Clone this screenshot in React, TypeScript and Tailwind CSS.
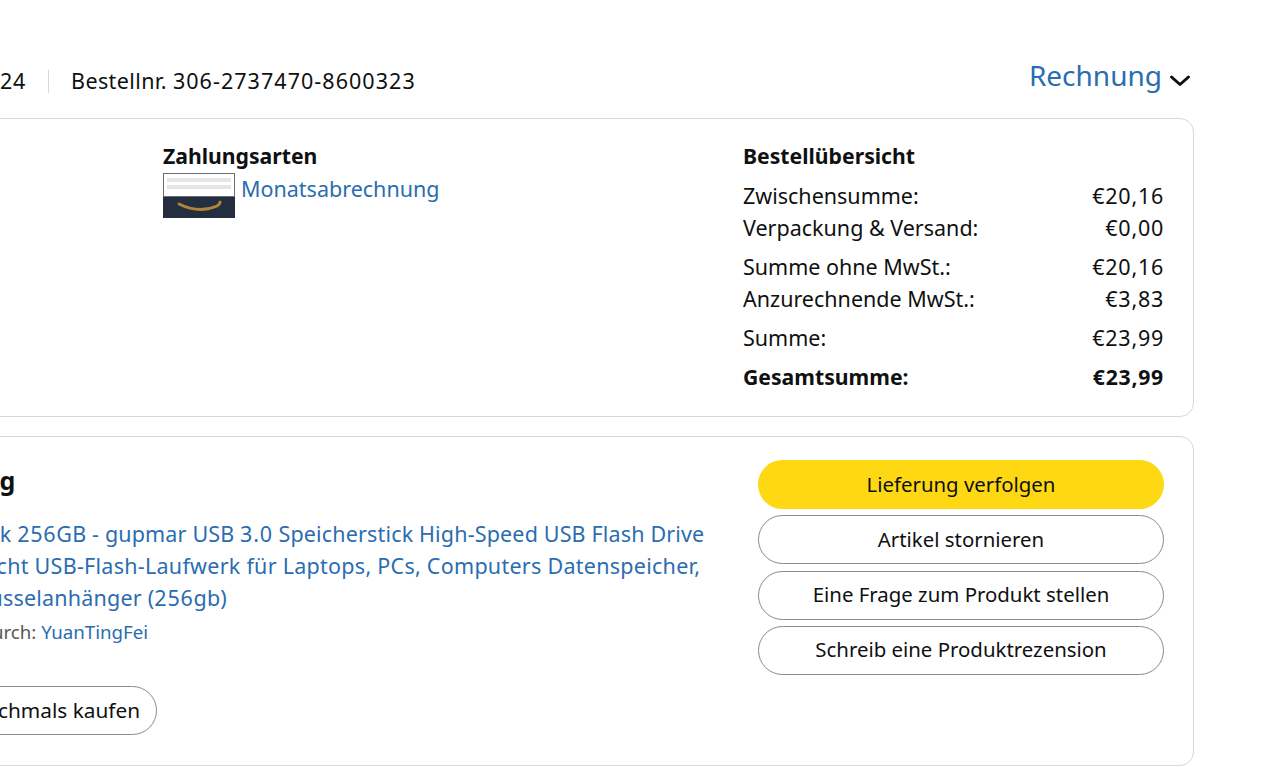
import React from "react";
function N({ children }: { children: React.ReactNode }) {
  return <span className="tracking-[0.75px]">{children}</span>;
}
function Row({ a, b, className = "" }: { a: string; b: string; className?: string }) {
  return (
    <div className={`flex justify-between ${className}`}>
      <span>{a}</span>
      <N>{b}</N>
    </div>
  );
}
function Btn({ children, className = "" }: { children: React.ReactNode; className?: string }) {
  return (
    <div className={`h-[49px] rounded-full flex items-center pb-[2px] text-[#0f1111] ${className}`}>
      {children}
    </div>
  );
}
export default function App() {
  return (
    <div className="w-[1280px] h-[767px] overflow-hidden bg-white font-['Noto_Sans',sans-serif] text-[#0f1111] text-[21.5px] leading-[32px]">
      <div className="ml-[-300px] w-[1494px] pt-[56px]">
        <div className="flex items-center justify-between h-[44px] mb-[18px]">
          <div className="flex items-center pt-[6px]">
            <span className="w-[326px] text-right whitespace-nowrap"><N>Bestellt am 9. April 2024</N></span>
            <span className="w-px h-[23px] bg-[#d5d9d9] ml-[22px] mr-[22px]"></span>
            <span className="whitespace-pre tracking-[0.4px]">Bestellnr. <span className="tracking-[1.05px]">306-2737470-8600323</span></span>
          </div>
          <div className="flex items-center gap-[7px] pr-[3px]">
            <span className="text-[#2a6db0] text-[28px] leading-[34px] mb-[6px]">Rechnung</span>
            <svg width="22" height="14" viewBox="0 0 22 14" fill="none" stroke="#0f1111" strokeWidth="3" strokeLinecap="round" strokeLinejoin="round" className="mt-[5px]"><path d="M2.5 3 L11 10.5 L19.5 3" /></svg>
          </div>
        </div>
        <div className="h-[299px] border border-[#d5d9d9] rounded-[14px] flex pl-[462px] pr-[29px] pt-[21px]">
          <div className="w-[580px]">
            <div className="font-bold text-[21.2px]">Zahlungsarten</div>
            <div className="flex items-start">
              <svg width="72" height="45" viewBox="0 0 72 45" className="mr-[6px] mt-[1px] shrink-0">
                <rect width="72" height="45" fill="#232f3e" />
                <rect x="0.5" y="0.5" width="71" height="23" fill="#fff" stroke="#6b6f75" />
                <rect x="4" y="5" width="64" height="4" fill="#e6e6e6" />
                <rect x="4" y="12" width="64" height="4" fill="#e6e6e6" />
                <path d="M16 31 Q36 41 54 33 Q57 31 57 29" stroke="#b5813a" strokeWidth="3" fill="none" strokeLinecap="round" />
              </svg>
              <span className="text-[#2a6db0] pt-[1px]">Monatsabrechnung</span>
            </div>
          </div>
          <div className="flex-1">
            <div className="font-bold text-[21.2px] mb-[8px]">Bestellübersicht</div>
            <Row a="Zwischensumme:" b="€20,16" />
            <Row a="Verpackung & Versand:" b="€0,00" className="mb-[7px]" />
            <Row a="Summe ohne MwSt.:" b="€20,16" />
            <Row a="Anzurechnende MwSt.:" b="€3,83" className="mb-[7px]" />
            <Row a="Summe:" b="€23,99" className="mb-[7px]" />
            <Row a="Gesamtsumme:" b="€23,99" className="font-bold text-[21.2px]" />
          </div>
        </div>
        <div className="mt-[19px] h-[330px] border border-[#d5d9d9] rounded-[14px] flex pl-[182px] pr-[29px] pt-[20px]">
          <div className="w-[875px] shrink-0">
            <div className="font-bold text-[25px] leading-[46px] whitespace-nowrap">Zustellung</div>
            <div className="pl-[33px] pt-[15px]">
              <div className="text-[#2a6db0] whitespace-nowrap">
                <div className="tracking-[0.16px]">USB Stick <N>256</N>GB - gupmar USB <N>3.0</N> Speicherstick High-Speed USB Flash Drive</div>
                <div className="tracking-[0.27px]">Mini Leicht USB-Flash-Laufwerk für Laptops, PCs, Computers Datenspeicher,</div>
                <div className="tracking-[0.2px]">Zu Schlüsselanhänger (<N>256</N>gb)</div>
              </div>
              <div className="text-[18.7px] leading-[36px] text-[#565959] whitespace-nowrap -ml-[8px]">Verkauf durch: <span className="text-[#2a6db0]">YuanTingFei</span></div>
              <div className="mt-[36px]">
                <Btn className="border border-[#888c8c] w-[241px] justify-end pr-[16px] text-[20.8px]">Nochmals kaufen</Btn>
              </div>
            </div>
          </div>
          <div className="flex-1 flex flex-col gap-[6.3px] pt-[3px] text-[20.4px]">
            <Btn className="bg-[#ffd814] justify-center">Lieferung verfolgen</Btn>
            <Btn className="border border-[#888c8c] justify-center">Artikel stornieren</Btn>
            <Btn className="border border-[#888c8c] justify-center">Eine Frage zum Produkt stellen</Btn>
            <Btn className="border border-[#888c8c] justify-center">Schreib eine Produktrezension</Btn>
          </div>
        </div>
      </div>
    </div>
  );
}
